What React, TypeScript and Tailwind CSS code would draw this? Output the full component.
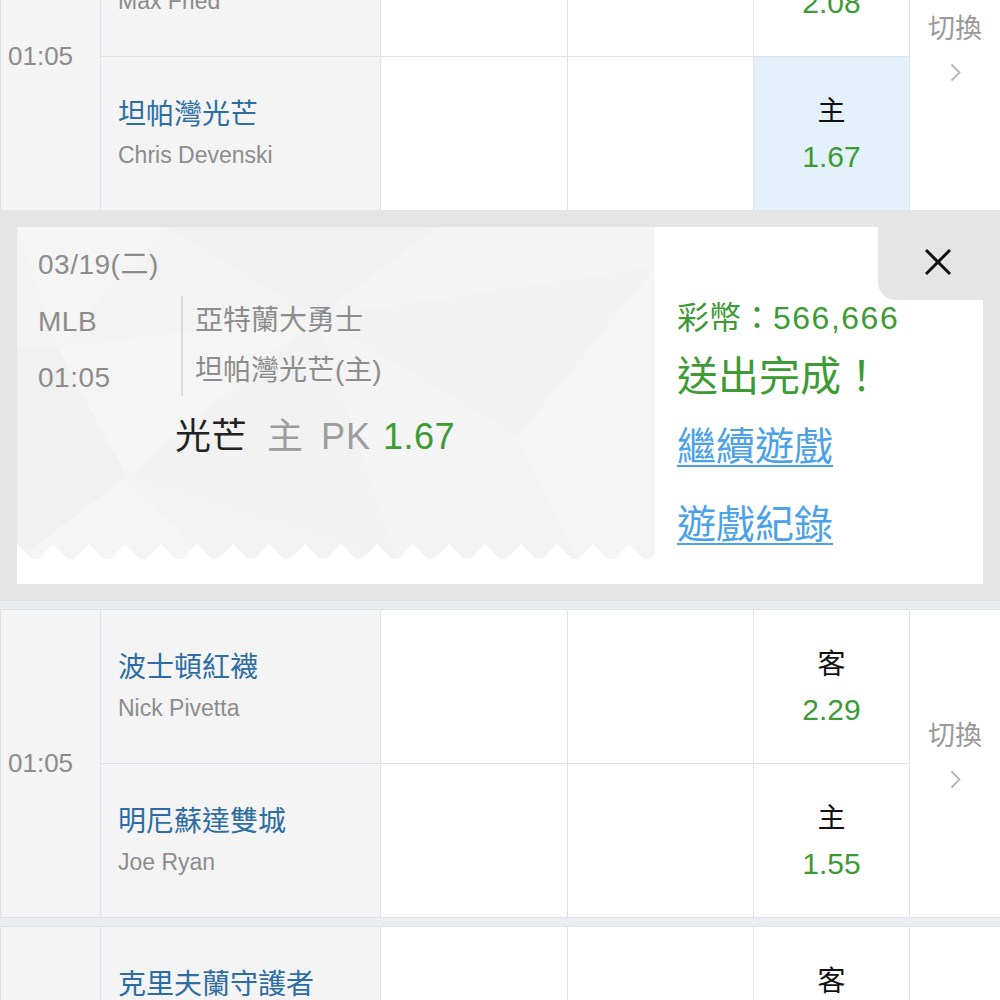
import React from "react";

type RowData = { team: string; pitcher: string; side: string; odds: string; hl?: boolean };

function Chevron() {
  return (
    <svg width="11" height="19" viewBox="0 0 11 19" fill="none">
      <polyline points="1.5,1.5 9.5,9.5 1.5,17.5" stroke="#b5b5b5" strokeWidth="1.8" />
    </svg>
  );
}

function CloseIcon() {
  return (
    <svg width="28" height="28" viewBox="0 0 28 28" fill="none">
      <line x1="2" y1="2" x2="26" y2="26" stroke="#111" strokeWidth="3" />
      <line x1="26" y1="2" x2="2" y2="26" stroke="#111" strokeWidth="3" />
    </svg>
  );
}

function Row({ r, first }: { r: RowData; first: boolean }) {
  return (
    <div className={first ? "flex h-[154px] border-b border-[#dde3ea]" : "flex h-[153px]"}>
      <div className="w-[280px] border-r border-[#dde3ea] bg-[#f4f4f4] pl-[17px] pt-[2px] flex flex-col justify-center">
        <div className="h-[40px] leading-[40px] text-[28px] text-[#2d6da3]">{r.team}</div>
        <div className="h-[40px] leading-[40px] text-[23px] text-[#8c8c8c]">{r.pitcher}</div>
      </div>
      <div className="w-[187px] border-r border-[#dde3ea] bg-white" />
      <div className="w-[186px] border-r border-[#dde3ea] bg-white" />
      <div
        className={
          "w-[156px] border-r border-[#dde3ea] flex flex-col items-center justify-center pt-[3px] " +
          (r.hl ? "bg-[#e4f1fb]" : "bg-white")
        }
      >
        <div className="h-[44px] leading-[44px] text-[28px] text-[#111]">{r.side}</div>
        <div className="h-[46px] leading-[46px] text-[30px] text-[#3d9b35]">{r.odds}</div>
      </div>
    </div>
  );
}

function Group({ time, rows }: { time: string; rows: RowData[] }) {
  return (
    <div className="flex h-[307px]">
      <div className="w-[101px] border-l border-r border-[#dde3ea] bg-[#f4f4f4] flex items-center pl-[7px]">
        <span className="text-[26px] text-[#8c8c8c]">{time}</span>
      </div>
      <div className="w-[809px] flex flex-col">
        {rows.map((r, i) => (
          <Row key={i} r={r} first={i === 0} />
        ))}
      </div>
      <div className="w-[90px] bg-white flex flex-col items-center justify-center pb-[21px]">
        <div className="h-[36px] leading-[36px] text-[27px] text-[#9a9a9a]">切換</div>
        <div className="mt-[17px] h-[18px] flex items-center">
          <Chevron />
        </div>
      </div>
    </div>
  );
}

function Separator() {
  return <div className="h-[10px] bg-[#ebedf0] border-y border-[#dde3ea]" />;
}

function Pattern() {
  return (
    <svg className="absolute inset-0" width="638" height="333" viewBox="0 0 638 333">
      <rect width="638" height="333" fill="#f3f3f3" />
      <polygon points="0,0 150,0 40,120" fill="#f5f5f5" />
      <polygon points="150,0 420,0 300,90" fill="#f1f1f1" />
      <polygon points="40,120 300,90 110,250" fill="#f5f5f5" />
      <polygon points="300,90 638,40 500,210" fill="#f2f2f2" />
      <polygon points="420,0 638,0 638,40 300,90" fill="#f4f4f4" />
      <polygon points="0,120 40,120 110,250 0,333" fill="#f1f1f1" />
      <polygon points="110,250 300,90 380,333" fill="#f2f2f2" />
      <polygon points="500,210 638,40 638,333 560,333" fill="#f5f5f5" />
      <polygon points="300,90 500,210 380,333" fill="#f4f4f4" />
      <polygon points="0,333 110,250 190,333" fill="#f5f5f5" />
    </svg>
  );
}

function Zigzag() {
  const pts: string[] = [];
  const period = 36;
  pts.push("0,16");
  for (let x = 0; x <= 638 + period; x += period) {
    pts.push(`${x - 15},16`);
    pts.push(`${x},1`);
    pts.push(`${x + 15},16`);
  }
  pts.push("680,16");
  pts.push("680,17");
  pts.push("0,17");
  return (
    <svg className="absolute left-0 bottom-0" width="638" height="17" viewBox="0 0 638 17">
      <polygon points={pts.join(" ")} fill="#ffffff" />
    </svg>
  );
}

function Popup() {
  return (
    <div className="h-[390px] bg-[#e5e5e5] pt-[17px] px-[17px]">
      <div className="h-[357px] flex">
        <div className="w-[638px] flex flex-col">
          <div className="relative h-[333px] overflow-hidden">
            <Pattern />
            <Zigzag />
            <div className="relative pl-[21px] pt-[18px] text-[#8c8c8c]">
              <div className="h-[40px] leading-[40px] text-[28px] tracking-[0.5px]">03/19(二)</div>
              <div className="mt-[9px] flex">
                <div className="w-[143px] flex flex-col text-[28px] tracking-[0.5px]">
                  <div className="h-[56px] leading-[56px]">MLB</div>
                  <div className="h-[56px] leading-[56px]">01:05</div>
                </div>
                <div className="mt-[2px] h-[100px] border-l-2 border-[#dcdcdc] pl-[12px] flex flex-col text-[28px]">
                  <div className="h-[50px] leading-[50px]">亞特蘭大勇士</div>
                  <div className="h-[50px] leading-[50px]">坦帕灣光芒(主)</div>
                </div>
              </div>
              <div className="mt-[6px] ml-[137px] h-[50px] leading-[50px] text-[36px] whitespace-nowrap flex">
                <span className="text-[#222]">光芒</span>
                <span className="text-[#9d9d9d] ml-[20px]">主</span>
                <span className="text-[#9d9d9d] ml-[18px] tracking-[1px]">PK</span>
                <span className="text-[#3d9b35] ml-[12px] tracking-[0.5px]">1.67</span>
              </div>
            </div>
          </div>
          <div className="h-[24px] bg-white" />
        </div>
        <div className="relative w-[328px] bg-white pl-[22px] pt-[69px]">
          <div className="absolute top-0 right-0 w-[105px] h-[73px] bg-[#e5e5e5] rounded-bl-[18px] flex items-center justify-center pl-[15px] pb-[4px]">
            <CloseIcon />
          </div>
          <div className="h-[44px] leading-[44px] text-[32px] text-[#3d9b35] whitespace-nowrap">
            彩幣：<span className="tracking-[1.5px]">566,666</span>
          </div>
          <div className="mt-[11px] h-[52px] leading-[52px] text-[41px] text-[#3d9b35] whitespace-nowrap">送出完成！</div>
          <div className="mt-[19px] h-[50px] leading-[50px] text-[39px] text-[#4ba2e8] underline decoration-2 underline-offset-[5px]">
            繼續遊戲
          </div>
          <div className="mt-[28px] h-[50px] leading-[50px] text-[39px] text-[#4ba2e8] underline decoration-2 underline-offset-[5px]">
            遊戲紀錄
          </div>
        </div>
      </div>
    </div>
  );
}

export default function App() {
  return (
    <div className="w-[1000px] h-[1000px] overflow-hidden bg-white font-['Liberation_Sans','Noto_Sans_CJK_TC',sans-serif]">
      <div className="-mt-[97px]">
        <Group
          time="01:05"
          rows={[
            { team: "亞特蘭大勇士", pitcher: "Max Fried", side: "客", odds: "2.08" },
            { team: "坦帕灣光芒", pitcher: "Chris Devenski", side: "主", odds: "1.67", hl: true },
          ]}
        />
        <Popup />
        <Separator />
        <Group
          time="01:05"
          rows={[
            { team: "波士頓紅襪", pitcher: "Nick Pivetta", side: "客", odds: "2.29" },
            { team: "明尼蘇達雙城", pitcher: "Joe Ryan", side: "主", odds: "1.55" },
          ]}
        />
        <Separator />
        <Group
          time="01:05"
          rows={[
            { team: "克里夫蘭守護者", pitcher: "Shane Bieber", side: "客", odds: "1.95" },
            { team: "西雅圖水手", pitcher: "Logan Gilbert", side: "主", odds: "1.80" },
          ]}
        />
      </div>
    </div>
  );
}
